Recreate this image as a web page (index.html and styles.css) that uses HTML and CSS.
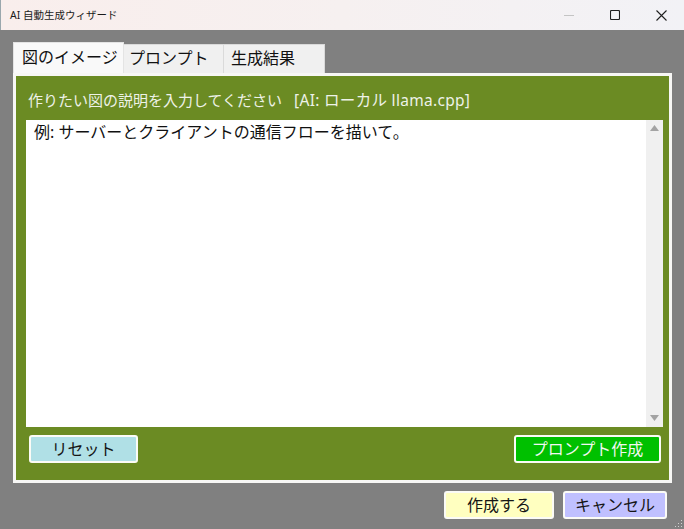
FILE: index.html
```html
<!DOCTYPE html>
<html lang="ja">
<head>
<meta charset="utf-8">
<title>AI 自動生成ウィザード</title>
<link rel="stylesheet" href="styles.css">
</head>
<body>
<div class="window">
  <header class="titlebar">
    <span class="title">AI 自動生成ウィザード</span>
    <div class="controls">
      <span class="ctl">
        <svg width="10" height="10" viewBox="0 0 10 10"><path d="M0 5.5H10" stroke="#c4c4c4" stroke-width="1"/></svg>
      </span>
      <span class="ctl">
        <svg width="10" height="10" viewBox="0 0 10 10"><rect x="0.5" y="0.5" width="9" height="9" rx="1" fill="none" stroke="#1f1f1f" stroke-width="1.1"/></svg>
      </span>
      <span class="ctl">
        <svg width="11" height="11" viewBox="0 0 11 11"><path d="M0.5 0.5L10.5 10.5M10.5 0.5L0.5 10.5" stroke="#1f1f1f" stroke-width="1.1"/></svg>
      </span>
    </div>
  </header>
  <main class="client">
    <div class="tabs">
      <div class="tabstrip">
        <div class="tab tab-active">図のイメージ</div>
        <div class="tab tab-second">プロンプト</div>
        <div class="tab tab-third">生成結果</div>
      </div>
      <div class="tabpage">
        <div class="label">作りたい図の説明を入力してください<span class="label-ai">[AI: ローカル llama.cpp]</span></div>
        <div class="editor">
          <div class="editor-text">例: サーバーとクライアントの通信フローを描いて。</div>
          <div class="scrollbar">
            <svg width="9" height="6" viewBox="0 0 9 6"><path d="M0 6L4.5 0L9 6Z" fill="#a3a3a3"/></svg>
            <svg width="9" height="6" viewBox="0 0 9 6"><path d="M0 0L4.5 6L9 0Z" fill="#a3a3a3"/></svg>
          </div>
        </div>
        <div class="page-actions">
          <button class="btn btn-reset">リセット</button>
          <button class="btn btn-prompt">プロンプト作成</button>
        </div>
      </div>
    </div>
    <div class="dialog-actions">
      <button class="btn btn-ok">作成する</button>
      <button class="btn btn-cancel">キャンセル</button>
    </div>
  </main>
  <svg class="grip" width="8" height="8" viewBox="0 0 8 8">
    <rect x="6" y="0" width="1" height="1" fill="#d0d0d0"/>
    <rect x="3" y="3" width="1" height="1" fill="#d0d0d0"/>
    <rect x="6" y="3" width="1" height="1" fill="#d0d0d0"/>
    <rect x="0" y="6" width="1" height="1" fill="#d0d0d0"/>
    <rect x="3" y="6" width="1" height="1" fill="#d0d0d0"/>
    <rect x="6" y="6" width="1" height="1" fill="#d0d0d0"/>
  </svg>
</div>
</body>
</html>
```
FILE: styles.css
```css
* { box-sizing: border-box; }

html, body {
  margin: 0;
  padding: 0;
}

body {
  width: 684px;
  height: 529px;
  overflow: hidden;
  background: #808080;
  font-family: "Noto Sans", "Noto Sans CJK JP", sans-serif;
}

.window {
  position: relative;
  width: 684px;
  height: 529px;
  background: #808080;
}

.titlebar {
  height: 30px;
  display: flex;
  align-items: center;
  justify-content: space-between;
  background: linear-gradient(to right, #f9eeec, #f6f0f0 50%, #f2f2f6);
  border-left: 1px solid #9aa7ad;
}

.title {
  padding-left: 9px;
  font-size: 10.5px;
  line-height: 14px;
  color: #1a1a1a;
  padding-bottom: 1px;
}

.controls {
  display: flex;
  height: 30px;
}

.ctl {
  width: 46px;
  height: 30px;
  display: flex;
  align-items: center;
  justify-content: center;
}

.client {
  padding: 12px 0 0 13px;
}

.tabs {
  width: 659px;
}

.tabstrip {
  height: 31px;
  display: flex;
  align-items: flex-end;
}

.tab {
  height: 29px;
  border: 1px solid #dadada;
  border-bottom: none;
  background: #f0f0f0;
  font-size: 16px;
  line-height: 27px;
  color: #111;
  white-space: nowrap;
}

.tab-active {
  height: 31px;
  width: 111px;
  padding-left: 8px;
  background: #f9f9f9;
  line-height: 29px;
  border-color: #e4e4e4;
}

.tab-second {
  width: 100px;
  padding-left: 5px;
  border-left: none;
}

.tab-third {
  width: 101px;
  padding-left: 7px;
  border-left: none;
}

.tabpage {
  height: 410px;
  border: 3px solid #f7f7f5;
  background: #6b8b23;
  padding: 14px 6px 0 10px;
}

.label {
  font-size: 15px;
  line-height: 20px;
  color: #eef2e8;
  margin: 0 0 10px 2px;
  white-space: nowrap;
}

.label-ai {
  margin-left: 12px;
  font-size: 15.5px;
  letter-spacing: 0.3px;
}

.editor {
  height: 307px;
  display: flex;
  background: #fff;
}

.editor-text {
  flex: 1;
  padding: 1px 7px 0 8px;
  font-size: 16px;
  line-height: 22px;
  color: #111;
  white-space: nowrap;
}

.scrollbar {
  width: 17px;
  background: #f0f0f0;
  display: flex;
  flex-direction: column;
  align-items: center;
  justify-content: space-between;
  padding: 5px 0 6px;
}

.page-actions {
  display: flex;
  justify-content: space-between;
  margin-top: 8px;
  padding: 0 2px 0 3px;
}

.btn {
  height: 28px;
  border: 2px solid #fbfbf6;
  border-radius: 3px;
  padding: 0;
  font-family: "Noto Sans", "Noto Sans CJK JP", sans-serif;
  font-size: 16px;
  line-height: 22px;
  color: #151515;
  text-align: center;
}

.btn-reset {
  width: 109px;
  background: #b0e0e6;
}

.btn-prompt {
  width: 147px;
  background: #00c000;
  color: #f2f7f2;
}

.dialog-actions {
  display: flex;
  justify-content: flex-end;
  gap: 9px;
  margin-top: 8px;
  padding-right: 17px;
}

.btn-ok {
  width: 110px;
  background: #ffffc0;
}

.btn-cancel {
  width: 104px;
  background: #c0c0ff;
}

.grip {
  position: absolute;
  right: 1px;
  bottom: 1px;
}
```
